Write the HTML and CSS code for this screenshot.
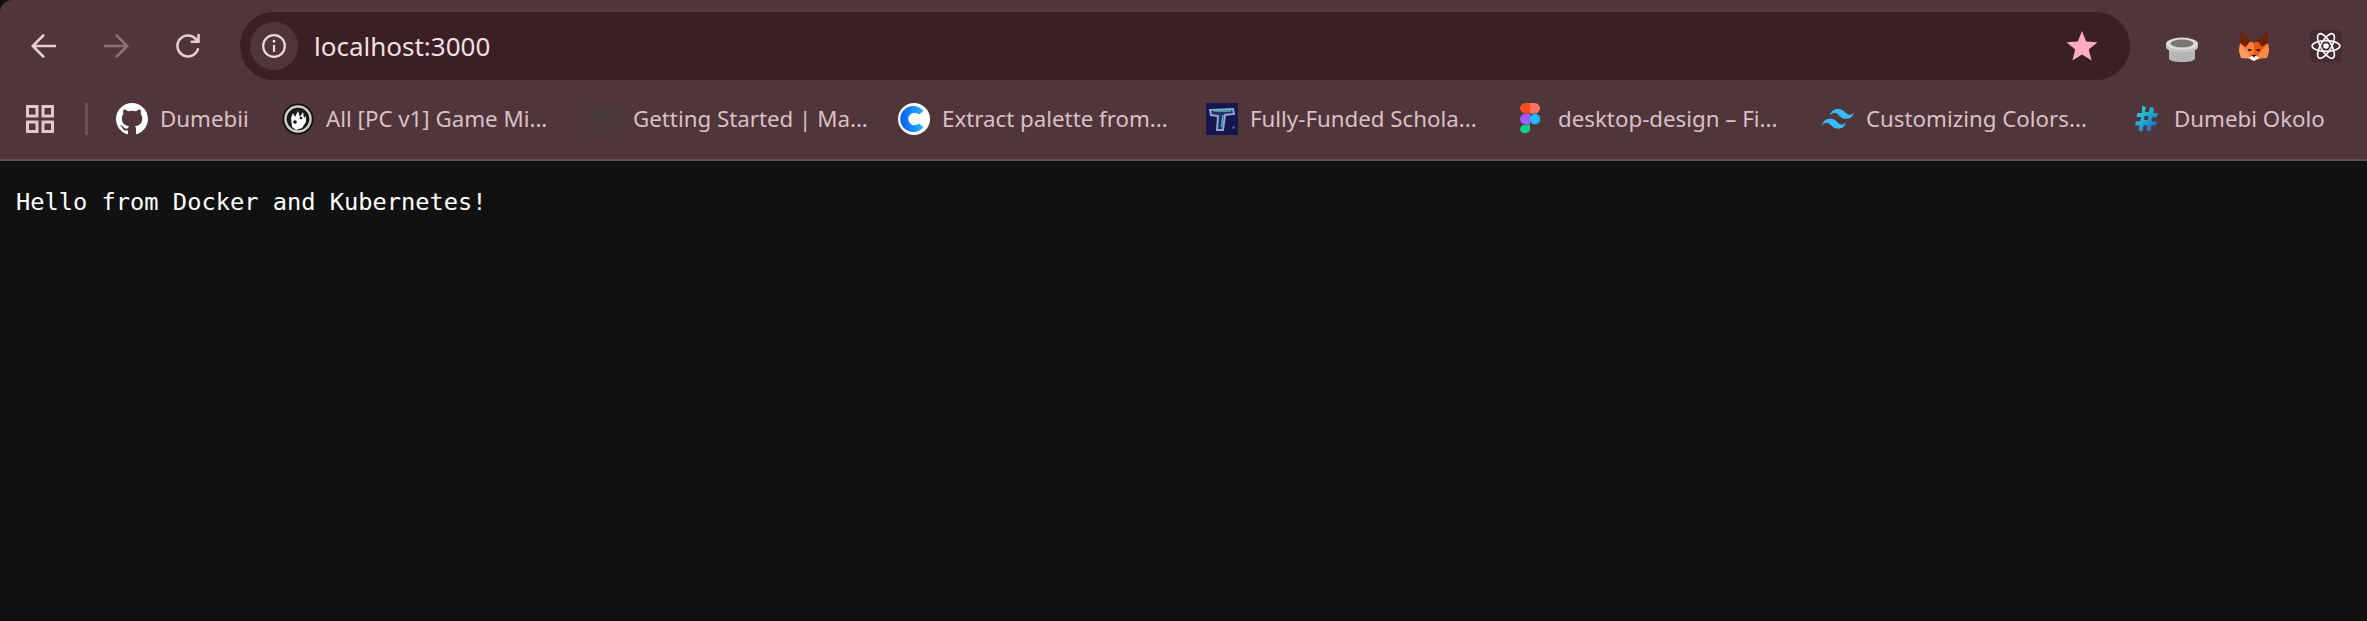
FILE: index.html
```html
<!DOCTYPE html>
<html lang="en">
<head>
<meta charset="utf-8">
<title>localhost:3000</title>
<link rel="stylesheet" href="styles.css">
</head>
<body>
<header class="chrome">
  <div class="toolbar">
    <div class="nav">
      <svg class="nav-icon" viewBox="0 0 24 24"><path d="M20 12H4.500M12 4.500 4.500 12l7.500 7.500"/></svg>
      <svg class="nav-icon dim" viewBox="0 0 24 24"><path d="M4 12h15.500M12 4.500l7.500 7.500-7.500 7.500"/></svg>
      <svg class="nav-icon" viewBox="0 0 24 24"><path d="M18.800 13.500a7 7 0 1 1-1.700-6.300L19 9.200M19 4v5.200h-5.200"/></svg>
    </div>
    <div class="omnibox">
      <div class="chip">
        <svg class="info" viewBox="0 0 24 24"><circle cx="12" cy="12" r="10"/><path d="M12 11v6.500"/><circle class="dot" cx="12" cy="7.600" r="1.300"/></svg>
      </div>
      <span class="url">localhost:3000</span>
      <svg class="star" viewBox="0 0 32 32"><path d="M16 1l4.200 10.400 11.300.8-8.700 7.200 2.800 11L16 24.400 6.400 30.400l2.800-11L.5 12.200l11.300-.8z"/></svg>
    </div>
    <div class="extensions">
      <svg class="ext" viewBox="0 0 32 32">
        <g transform="translate(0 4)">
          <path fill="#b5b5b5" d="M3 13h26v11c0 3-5.500 4-13 4s-13-1-13-4z"/>
          <ellipse cx="16" cy="10" rx="16" ry="6.500" fill="#dcdcdc"/>
          <path fill="#c4c4c4" d="M0 10v3c0 3 7 5.500 16 5.500s16-2.500 16-5.500v-3c0 3-7 5.500-16 5.500S0 13 0 10z"/>
          <ellipse cx="16" cy="9.500" rx="11.500" ry="4" fill="#777"/>
        </g>
      </svg>
      <svg class="ext" viewBox="0 0 32 32">
        <path fill="#f6651e" d="M2 13 6 10 16 13 26 10 30 13 31 21 29 28 21 29 16 31 11 29 3 28 1 21z"/>
        <path fill="#ff7f3d" d="M16 13 9 11 7 20 12 25 16 23z"/>
        <path fill="#e9540f" d="M16 13 23 11 25 20 20 25 16 23z"/>
        <path fill="#ff9a63" d="M2 14 8 20 12 25 10 28 3 28 1 21z"/>
        <path fill="#ff8a4c" d="M30 14 24 20 20 25 22 28 29 28 31 21z"/>
        <path fill="#6e2207" d="M2 2 13 10 8 17 2 13z"/>
        <path fill="#6e2207" d="M30 2 19 10 24 17 30 13z"/>
        <path fill="#5a1c05" d="M10 19h3.500v2H10zM18.500 19H22v2h-3.500z"/>
        <path fill="#fff" d="M10 27.500l4-1.500h4l4 1.500-6 3.500z"/>
        <path fill="#30140a" d="M13.500 25h5L16 27.500z"/>
      </svg>
      <div class="react-tile">
        <svg class="react" viewBox="-14 -14 28 28">
          <circle r="2.600" class="nucleus"/>
          <ellipse rx="13" ry="5"/>
          <ellipse rx="13" ry="5" transform="rotate(60)"/>
          <ellipse rx="13" ry="5" transform="rotate(120)"/>
        </svg>
      </div>
    </div>
  </div>
  <nav class="bookmarks">
    <svg class="apps" viewBox="0 0 28 28"><path d="M1.500 1.500h9.500V11H1.500zM17 1.500h9.500V11H17zM1.500 17h9.500v9.500H1.500zM17 17h9.500v9.500H17z"/></svg>
    <span class="divider"></span>
    <div class="bm-list">
      <a class="bm">
        <svg class="fav" viewBox="0 0 16 16"><path fill="#fff" fill-rule="evenodd" d="M8 0C3.580 0 0 3.580 0 8c0 3.540 2.290 6.530 5.470 7.590.4.070.55-.17.55-.38 0-.19-.01-.82-.01-1.490-2.010.370-2.530-.49-2.690-.94-.09-.23-.48-.94-.82-1.130-.28-.15-.68-.52-.01-.530.630-.010 1.080.58 1.230.82.720 1.210 1.870.870 2.330.66.070-.52.280-.87.510-1.070-1.780-.2-3.640-.89-3.640-3.950 0-.87.310-1.590.820-2.150-.08-.2-.36-1.020.08-2.120 0 0 .67-.21 2.200.820.640-.18 1.320-.27 2-.27s1.360.09 2 .27c1.530-1.040 2.200-.82 2.200-.82.440 1.100.160 1.920.08 2.120.510.560.820 1.270.820 2.150 0 3.070-1.870 3.750-3.650 3.950.290.250.540.730.540 1.480 0 1.070-.01 1.930-.01 2.200 0 .210.150.460.550.380A8.010 8.010 0 0 0 16 8c0-4.420-3.580-8-8-8z"/></svg>
        <span class="label">Dumebii</span>
      </a>
      <a class="bm">
        <svg class="fav" viewBox="0 0 32 32"><circle cx="16" cy="16" r="15.500" fill="#111"/><circle cx="16" cy="16" r="12.500" fill="none" stroke="#cfcfcf" stroke-width="2.500"/><circle cx="16" cy="16" r="10.500" fill="#1c1c1c"/><path fill="#fff" d="M9 15l2-5 2 4 3-6 2 6 3-5 1 6 2-2v6l-4 6-6 2-4-3z"/><circle cx="13" cy="19" r="1.800" fill="#111"/><circle cx="19" cy="15" r="1.300" fill="#111"/></svg>
        <span class="label">All [PC v1] Game Mi...</span>
      </a>
      <a class="bm">
        <svg class="fav md" viewBox="0 0 32 24"><rect x="1" y="1" width="30" height="22" fill="none" stroke="#433a3c" stroke-width="2"/><path fill="none" stroke="#433a3c" stroke-width="3" d="M6 18V7l4.500 5L15 7v11"/><path fill="#433a3c" d="M21 6h3v7h3l-4.500 6-4.500-6h3z"/></svg>
        <span class="label">Getting Started | Ma...</span>
      </a>
      <a class="bm">
        <svg class="fav" viewBox="0 0 32 32"><defs><linearGradient id="cblue" x1="0" x2="1" y1="0" y2="0"><stop offset="0" stop-color="#0a5cf0"/><stop offset="1" stop-color="#27b4ff"/></linearGradient></defs><circle cx="16" cy="16" r="16" fill="#fff"/><path fill="url(#cblue)" d="M25.500 8A13 13 0 1 0 25.500 24L21 20.500A6.300 6.300 0 1 1 21 11.500z"/><path fill="#fff" d="M26 13h4v6h-4z"/></svg>
        <span class="label">Extract palette from...</span>
      </a>
      <a class="bm">
        <svg class="fav" viewBox="0 0 32 32"><rect width="32" height="32" fill="#17174f"/><path fill="#26306b" stroke="#8fa6c9" stroke-width="2" d="M4 7l23-1 1 5-9 1-2 15h-6l1-14-7-1z"/><path fill="none" stroke="#4fb3b8" stroke-width="1.500" d="M8 8h17M17 12l-1.500 12"/><circle cx="27.500" cy="24.500" r="1.200" fill="#5a6aa0"/></svg>
        <span class="label">Fully-Funded Schola...</span>
      </a>
      <a class="bm">
        <svg class="fav figma" viewBox="0 0 20 32"><path fill="#f24e1e" d="M0 5.300A5.300 5.300 0 0 1 5.300 0H10v10.600H5.300A5.300 5.300 0 0 1 0 5.300z"/><path fill="#ff7262" d="M10 0h4.700a5.300 5.300 0 0 1 0 10.600H10z"/><path fill="#a259ff" d="M0 16a5.300 5.300 0 0 1 5.300-5.300H10v10.600H5.300A5.300 5.300 0 0 1 0 16z"/><circle cx="15" cy="16" r="5.300" fill="#1abcfe"/><path fill="#0acf83" d="M0 26.700a5.300 5.300 0 0 1 5.300-5.300H10v5.300a5.300 5.300 0 0 1-10 0z"/></svg>
        <span class="label">desktop-design – Fi...</span>
      </a>
      <a class="bm">
        <svg class="fav" viewBox="0 0 32 20"><path fill="#38bdf8" d="M16 0C11.700 0 9 2.200 8 6.600c1.600-2.200 3.500-3 5.600-2.500 1.200.3 2 1.200 3 2.200C18.200 7.900 20 9.800 24 9.800c4.300 0 7-2.200 8-6.600-1.600 2.200-3.500 3-5.600 2.500-1.200-.3-2-1.200-3-2.200C21.800 1.900 20 0 16 0zM8 9.800c-4.300 0-7 2.200-8 6.600 1.600-2.200 3.500-3 5.600-2.500 1.200.3 2 1.200 3 2.200 1.600 1.600 3.400 3.500 7.400 3.500 4.300 0 7-2.200 8-6.600-1.600 2.200-3.500 3-5.600 2.500-1.200-.3-2-1.200-3-2.200C14.200 11.700 12.400 9.800 8 9.800z"/></svg>
        <span class="label">Customizing Colors...</span>
      </a>
      <a class="bm">
        <svg class="fav hash" viewBox="0 0 24 28"><defs><linearGradient id="hgrad" x1="0" x2="1" y1="0" y2="1"><stop offset="0" stop-color="#2fdcd0"/><stop offset=".5" stop-color="#1fa8d8"/><stop offset="1" stop-color="#1558b8"/></linearGradient></defs><path fill="url(#hgrad)" d="M7 1l4 1-1 5h4l1-5 4 1-1 5h5l-1 4-5 .500-.500 4H22l-1 4h-4.500l-1 6-4-1 1-5h-4l-1 6-4-1 1-5H0l1-4 4.500-.500.500-4H1.500l1-4H7zM9.500 11l-.500 4h4l.500-4z"/></svg>
        <span class="label">Dumebi Okolo</span>
      </a>
    </div>
  </nav>
</header>
<main class="page">Hello from Docker and Kubernetes!</main>
</body>
</html>
```

FILE: styles.css
```css
* { box-sizing: border-box; }
html, body { margin: 0; height: 100%; }
body { background: #111111; overflow: hidden; }

.chrome {
  height: 161px;
  background: #50353b;
  border-top-left-radius: 12px;
  border-bottom: 2px solid #5a5052;
  font-family: "Noto Sans", "Open Sans", sans-serif;
}

.toolbar {
  height: 92px;
  display: flex;
  align-items: flex-start;
  padding-top: 12px;
}

.nav {
  width: 240px;
  height: 68px;
  flex: none;
  display: flex;
  align-items: center;
  padding-left: 26px;
  gap: 36px;
}
.nav-icon {
  width: 36px;
  height: 36px;
  flex: none;
  fill: none;
  stroke: #e8ced3;
  stroke-width: 1.700;
}
.nav-icon.dim { stroke: #8a7076; }

.omnibox {
  width: 1890px;
  height: 68px;
  flex: none;
  background: #3a1f24;
  border-radius: 34px;
  display: flex;
  align-items: center;
  padding: 0 32px 0 10px;
}
.chip {
  width: 48px;
  height: 48px;
  flex: none;
  border-radius: 50%;
  background: #50353b;
  display: flex;
  align-items: center;
  justify-content: center;
}
.info {
  width: 26px;
  height: 26px;
  fill: none;
  stroke: #f0dadf;
  stroke-width: 2;
}
.info .dot { fill: #f0dadf; stroke: none; }
.url {
  margin-left: 16px;
  font-size: 26px;
  color: #f2dfe3;
  flex: 1;
}
.star { width: 32px; height: 32px; fill: #ffabbd; flex: none; }

.extensions {
  flex: 1;
  height: 68px;
  display: flex;
  align-items: center;
  padding-left: 36px;
  gap: 40px;
}
.ext { width: 32px; height: 32px; flex: none; }
.react-tile {
  width: 32px;
  height: 32px;
  flex: none;
  border-radius: 3px;
  background: #452c32;
  display: flex;
  align-items: center;
  justify-content: center;
}
.react {
  width: 30px;
  height: 30px;
  fill: none;
  stroke: #fff;
  stroke-width: 1.500;
}
.react .nucleus { fill: #fff; stroke: none; }

.bookmarks {
  height: 67px;
  display: flex;
  align-items: center;
  padding: 0 0 14px 26px;
}
.apps { width: 28px; height: 28px; flex: none; fill: none; stroke: #e0c9ce; stroke-width: 3; }
.divider {
  width: 3px;
  height: 32px;
  flex: none;
  margin-left: 31px;
  background: #6b5056;
}
.bm-list {
  margin-left: 28px;
  flex: 1;
  display: grid;
  grid-template-columns: 166px 307px 309px 308px 314px 302px 313px 1fr;
  align-items: center;
}
.bm { display: flex; align-items: center; gap: 12px; }
.fav { width: 32px; height: 32px; flex: none; }
.fav.figma { width: 20px; margin-right: 6px; }
.fav.hash { width: 24px; margin-right: 3px; }
.label {
  font-size: 22.300px;
  color: #d9c0c6;
  white-space: nowrap;
}

.page {
  padding: 25px 16px;
  font-family: "DejaVu Sans Mono", monospace;
  font-size: 23.700px;
  line-height: 32px;
  color: #ffffff;
}
```
